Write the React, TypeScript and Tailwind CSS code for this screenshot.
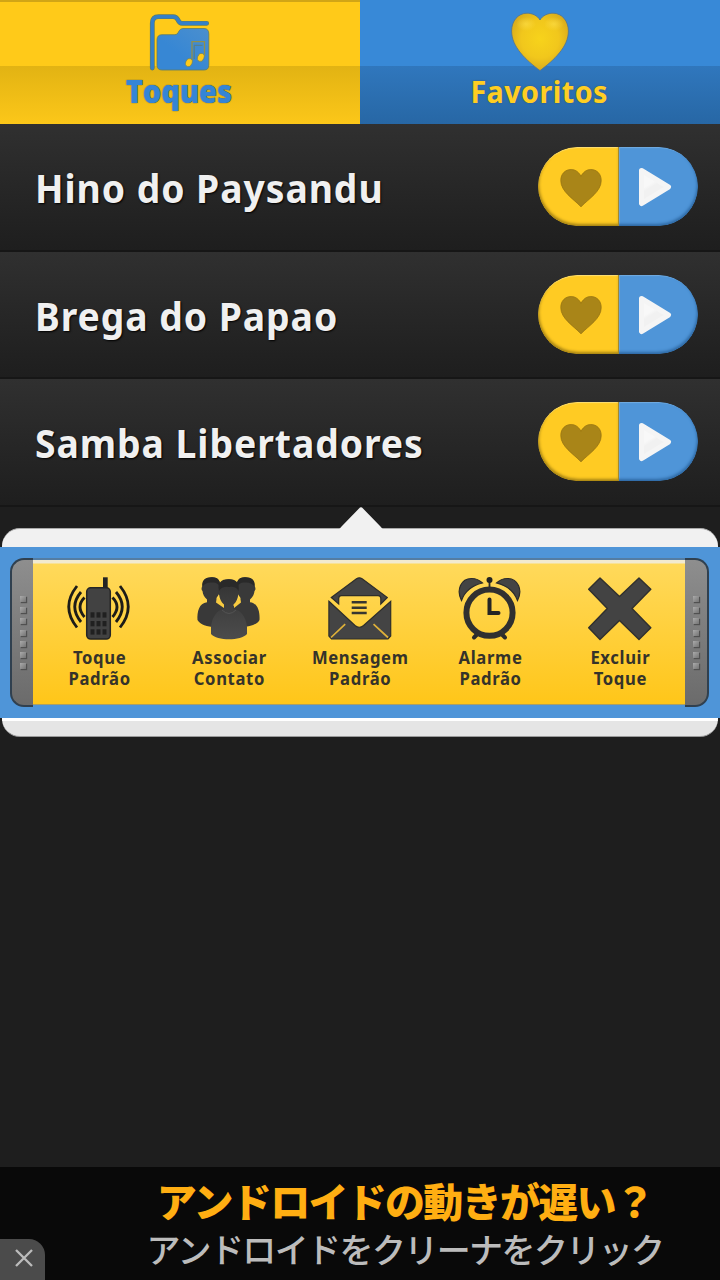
import React from "react";

const songs = ["Hino do Paysandu", "Brega do Papao", "Samba Libertadores"];

const FolderIcon: React.FC = () => (
  <svg width="64" height="60" viewBox="0 0 64 60" fill="none">
    <defs>
      <linearGradient id="folder" x1="1" y1="0" x2="0.4" y2="0.6">
        <stop offset="0" stopColor="#4b8fce" />
        <stop offset="1" stopColor="#3787d4" />
      </linearGradient>
    </defs>
    <path
      d="M4.3 56V11Q4.3 4.7 10.5 4.7H25Q28.5 4.7 30 8Q31.5 11.3 34 11.3H58.7"
      stroke="#5d7c68"
      strokeWidth="4.8"
      strokeLinecap="round"
    />
    <path
      d="M4.3 56V11Q4.3 4.7 10.5 4.7H25Q28.5 4.7 30 8Q31.5 11.3 34 11.3H58.7"
      stroke="#3480c8"
      strokeWidth="3.4"
      strokeLinecap="round"
    />
    <path
      d="M14 22.7H27Q29.5 22.7 30.5 20L31 19Q32.3 16.5 35 16.5H56Q60.8 16.5 60.8 22V53Q60.8 58 56 58H14Q9 58 9 53V28Q9 22.7 14 22.7Z"
      fill="url(#folder)"
      stroke="#5d7c68"
      strokeWidth="0.8"
    />
    <path d="M44 49V29.7H56.5V44" stroke="#90904c" strokeWidth="1.3" />
    <path d="M46.2 47V33.3H54.5" stroke="#5b7d7c" strokeWidth="1" />
    <ellipse cx="40.9" cy="50.6" rx="3.2" ry="4.2" transform="rotate(22 40.9 50.6)" fill="#ffca19" stroke="#6c8264" strokeWidth="0.7" />
    <ellipse cx="52.8" cy="45.4" rx="3.2" ry="4.2" transform="rotate(22 52.8 45.4)" fill="#ffca19" stroke="#6c8264" strokeWidth="0.7" />
  </svg>
);

const BigHeart: React.FC = () => (
  <svg width="58" height="60" viewBox="0 0 58 60">
    <defs>
      <radialGradient id="heart" cx="0.5" cy="0.45" r="0.6">
        <stop offset="0" stopColor="#f7d31b" />
        <stop offset="0.55" stopColor="#f1c71c" />
        <stop offset="1" stopColor="#d3a51d" />
      </radialGradient>
      <radialGradient id="shine">
        <stop offset="0" stopColor="#fcdc45" stopOpacity="0.7" />
        <stop offset="1" stopColor="#fcdc45" stopOpacity="0" />
      </radialGradient>
    </defs>
    <path
      d="M29 8C26.5 3.500 21 1.2 16 1.2C7 1.2 0.6 9 0.6 19C0.6 35 15 48 29 58.6C43 48 57.4 35 57.4 19C57.4 9 51 1.2 42 1.2C37 1.2 31.5 3.500 29 8Z"
      fill="url(#heart)"
      stroke="#56748a"
      strokeWidth="0.8"
    />
    <ellipse cx="15" cy="12" rx="10" ry="7" fill="url(#shine)" />
    <ellipse cx="43" cy="12" rx="10" ry="7" fill="url(#shine)" />
  </svg>
);

const SmallHeart: React.FC = () => (
  <svg width="42" height="40" viewBox="0 0 42 40">
    <path
      d="M21 8.3C19 4.3 15.5 1.5 11.3 1.5C5 1.5 0.8 6 0.8 12.5C0.8 23.5 13 30.5 21 38.8C29 30.5 41.2 23.5 41.2 12.5C41.2 6 37 1.5 30.7 1.5C26.5 1.5 23 4.3 21 8.3Z"
      fill="#a98518"
      stroke="#987512"
      strokeWidth="0.8"
    />
  </svg>
);

const PlayIcon: React.FC = () => (
  <svg width="34" height="40" viewBox="0 0 34 40">
    <defs>
      <linearGradient id="play" x1="0" y1="0" x2="0.5" y2="1">
        <stop offset="0.45" stopColor="#f8f8f8" />
        <stop offset="0.55" stopColor="#f1f1f1" />
      </linearGradient>
    </defs>
    <path
      d="M3.5 3.5L30.5 20L3.5 36.5Z"
      fill="url(#play)"
      stroke="#f5f5f5"
      strokeWidth="5"
      strokeLinejoin="round"
    />
  </svg>
);

const PhoneIcon: React.FC = () => (
  <svg width="64" height="64" viewBox="0 0 64 64" fill="none">
    <g stroke="#1d1c18" strokeWidth="2.8">
      <path d="M10 9Q-6.500 29.7 10 50.5M14 15Q1.5 29.7 14 45M17.5 20.5Q8.5 29.7 17.5 40" />
      <path d="M53 9Q69.500 29.7 53 50.5M49 15Q61.5 29.7 49 45M45.5 20.5Q54.5 29.7 45.5 40" />
    </g>
    <rect x="36" y="0.3" width="4.7" height="13" fill="#242424" />
    <rect x="19.7" y="10.8" width="23.6" height="51.3" rx="4" fill="#424242" stroke="#252525" strokeWidth="1.5" />
    {[35.3, 44, 52.3].map((y) => (
      <g key={y} fill="#202020">
        <rect x="23.5" y={y} width="4" height="5.3" />
        <rect x="29.5" y={y} width="4" height="5.3" />
        <rect x="35.5" y={y} width="4" height="5.3" />
      </g>
    ))}
  </svg>
);

const PeopleIcon: React.FC = () => (
  <svg width="64" height="64" viewBox="0 0 64 64">
    <defs>
      <linearGradient id="person" x1="0" y1="0" x2="0" y2="1">
        <stop offset="0" stopColor="#333" />
        <stop offset="1" stopColor="#4c4c4c" />
      </linearGradient>
    </defs>
    <g fill="#393939">
      <path d="M10 22.5C7 20 5.8 17 5.5 14C4 13 4.5 10 5.5 9C5.5 3 10 0.3 15 0.3C20 0.3 23 3 23.3 8C23.3 14 22 18 19.5 21V25L30 31L20 50C12 50.5 3 48 0.5 43C0 35 2 26 10 25.2Z" />
      <path d="M53 22.5C56 20 57.2 17 57.5 14C59 13 58.5 10 57.5 9C57.5 3 53 0.3 48 0.3C43 0.3 40 3 39.7 8C39.7 14 41 18 43.5 21V25L33 31L43 50C51 50.5 60 48 62.5 43C63 35 61 26 53 25.2Z" />
    </g>
    <path d="M5.5 10C4 3 9 0 15 0.3C21 0 24 4 22.8 10Q21 5 15 5.5Q8 5 5.5 10ZM57.5 10C59 3 54 0 48 0.3C42 0 39 4 40.2 10Q42 5 48 5.5Q55 5 57.5 10Z" fill="#292929" />
    <path d="M20.5 20.5L27 26V31L19 25.5ZM42.5 20.5L37 26V31L44 25.5Z" fill="#f8cb40" />
    <path
      d="M27 27.5C24 25 22.5 21 22.2 18C20 17 20.8 13.5 22 12.5C22 5 27 2.3 31.7 2.3C37 2.3 41 5 41.5 12.5C42.7 13.5 43 17 41.2 18C40.8 21 39.5 25 36.5 27.5V32C44 33 49 40 50 50V57C44 64 20 64 14 57V50C15 40 20 33 27 32Z"
      fill="url(#person)"
    />
    <path d="M22 14C20 5 25 2 32 2.3C39 2 43 6 41.5 14Q39 9 32 10Q25 9 22 14Z" fill="#292929" />
    <path d="M25 33Q32 40 39 33" fill="none" stroke="#555" strokeWidth="0.9" />
  </svg>
);

const MailIcon: React.FC = () => (
  <svg width="64" height="64" viewBox="0 0 64 64" fill="#444">
    <path
      d="M3.3 20.5L28.5 1.8Q31.3 -0.2 34.1 1.8L59.3 20.5L52.8 27V21.5Q52.8 18.7 50 18.7H13.5Q10.7 18.7 10.7 21.5V27Z"
      stroke="#2e2e2b"
      strokeWidth="1.2"
    />
    <path
      d="M0.9 24.3L27 48.5Q31.3 52 35.6 48.5L62.7 24.3V59L60 62H3.5L0.9 59Z"
      stroke="#2e2e2b"
      strokeWidth="1.2"
    />
    <path d="M3 60.5L17.2 47.2M60 60.5L45.5 47.2" stroke="#dfb139" strokeWidth="1.7" />
    <path d="M23.7 25.3H38.7M23.7 30.7H38.7M23.7 36H38.7" stroke="#373630" strokeWidth="2.5" />
  </svg>
);

const AlarmIcon: React.FC = () => (
  <svg width="64" height="64" viewBox="0 0 64 64" fill="none" strokeLinecap="round">
    <path d="M3.5 23.5C-2 13 3 1.5 13.5 1.5C18 1.5 22 3.5 24.5 6C14 8.5 6.5 15 3.5 23.5Z" fill="#444" stroke="#2b2b2b" strokeWidth="1.2" />
    <path d="M59.5 23.5C65 13 60 1.5 49.5 1.5C45 1.5 41 3.5 38.5 6C49 8.5 56.5 15 59.5 23.5Z" fill="#444" stroke="#2b2b2b" strokeWidth="1.2" />
    <path d="M31.5 3V10" stroke="#2b2b2b" strokeWidth="1.8" />
    <circle cx="31.5" cy="3.1" r="3" fill="#222" />
    <path d="M19.5 57L16 60.5M43.5 57L47 60.5" stroke="#2b2b2b" strokeWidth="4" />
    <circle cx="31.5" cy="35.7" r="23.1" stroke="#303030" strokeWidth="6" />
    <path d="M31.5 22.5V36H40.5" stroke="#252525" strokeWidth="4" />
  </svg>
);

const DeleteIcon: React.FC = () => (
  <svg width="64" height="64" viewBox="0 0 64 64">
    <path
      d="M12 1L31.5 19.6L51 1L62.8 12.3L44 31.5L62.8 50.7L51 62.5L31.5 43.5L12 62.5L0.7 50.7L19.3 31.5L0.7 12.3Z"
      fill="#434343"
      stroke="#30302e"
      strokeWidth="1.4"
      strokeLinejoin="round"
    />
  </svg>
);

const actions = [
  { icon: <PhoneIcon />, label: "Toque Padrão" },
  { icon: <PeopleIcon />, label: "Associar Contato" },
  { icon: <MailIcon />, label: "Mensagem Padrão" },
  { icon: <AlarmIcon />, label: "Alarme Padrão" },
  { icon: <DeleteIcon />, label: "Excluir Toque" },
];

const GripDots: React.FC = () => (
  <div className="flex flex-col gap-[5.2px]">
    {[0, 1, 2, 3, 4, 5, 6].map((i) => (
      <span
        key={i}
        className="size-[6px] bg-linear-to-br from-[#ababab] to-[#747474] shadow-[1px_1px_1px_#505050]"
      />
    ))}
  </div>
);

const SongRow: React.FC<{ title: string }> = ({ title }) => (
  <li className="flex h-[127.5px] items-center justify-between border-b-2 border-[#161616] bg-linear-to-b from-[#303030] to-[#1e1e1e] pr-[22px] pl-[35px]">
    <span className="origin-left scale-x-[0.933] pt-[3px] text-[40px] font-bold tracking-[1px] whitespace-nowrap text-[#f0f0f0] [text-shadow:1px_1px_2px_#000]">
      {title}
    </span>
    <div className="flex h-[79px] w-[160px] overflow-hidden rounded-full">
      <button
        type="button"
        className="flex flex-1 items-center justify-center rounded-l-full border-r border-[#a58a2c] bg-[#ffcb23] pt-[2px] pl-[6px] shadow-[inset_1px_-2px_3px_#a58213,inset_0_1px_1px_#ffe27a]"
      >
        <SmallHeart />
      </button>
      <button
        type="button"
        className="flex flex-1 items-center justify-center rounded-r-full bg-[#4f95d8] pt-[1px] pr-[6px] shadow-[inset_-1px_-2px_3px_#2e69a4,inset_1px_1px_1px_#76afe3]"
      >
        <PlayIcon />
      </button>
    </div>
  </li>
);

const App: React.FC = () => {
  return (
    <div className="flex h-[1280px] w-[720px] flex-col overflow-hidden bg-[#1e1e1e] font-['Noto_Sans','Open_Sans',sans-serif]">
      <nav className="flex h-[124px] shrink-0">
        <button
          type="button"
          className="flex w-[360px] flex-col items-center border-t-2 border-[#d1a516] bg-[linear-gradient(#ffca19_64px,#e2b313_64px,#fcc719_122px)] pt-[10px]"
        >
          <FolderIcon />
          <span className="scale-x-[0.93] pr-[2px] font-['Open_Sans',sans-serif] text-[31px] leading-[38px] font-extrabold text-[#3585d6] [text-shadow:0_0_1px_#5a6448,0_0_1px_#5a6448]">
            Toques
          </span>
        </button>
        <button
          type="button"
          className="flex flex-1 flex-col items-center bg-[linear-gradient(#3889d7_66px,#3077bd_66px,#2767a5_124px)] pt-[12px] pr-[1px]"
        >
          <BigHeart />
          <span className="scale-x-[0.94] text-[30.5px] leading-[38px] font-bold tracking-[0.5px] text-[#ffce22] [text-shadow:0_0_2px_#35576f]">
            Favoritos
          </span>
        </button>
      </nav>

      <ul className="shrink-0">
        {songs.map((title) => (
          <SongRow key={title} title={title} />
        ))}
      </ul>

      <section className="flex shrink-0 flex-col">
        <div className="flex h-[21.5px] justify-center">
          <svg width="48" height="23" viewBox="0 0 48 23" className="relative ml-[2px] shrink-0">
            <path d="M0 23Q3 22 5 19L22 1.5Q24 -1 26 1.5L43 19Q45 22 48 23Z" fill="#f1f1f1" />
          </svg>
        </div>
        <div className="mx-[2px] h-[19px] rounded-t-[18px] border-t border-[#aaa] bg-[#f1f1f1]" />
        <div className="flex h-[171px] bg-[#4f95d8] px-[10px] pt-[11px] pb-[11px]">
          <div className="flex w-[23px] items-center justify-center rounded-l-[14px] border-2 border-r-0 border-[#30404f] bg-linear-to-b from-[#8e8e8e] to-[#6b6b6b]">
            <GripDots />
          </div>
          <div className="mb-[2px] flex w-[652px] border-t-2 border-b border-t-[#547da3] border-b-[#aa9f65] bg-[linear-gradient(#f2ead0_3px,#ffd95b_4px,#ffc619)]">
            {actions.map(({ icon, label }) => (
              <button
                type="button"
                key={label}
                className="flex flex-1 flex-col items-center pt-[17px] pl-[1px] text-[#35332a]"
              >
                {icon}
                <span className="mt-[6px] w-min scale-x-[0.925] pl-[1px] text-[18px] leading-[21px] font-bold tracking-[0.7px]">
                  {label}
                </span>
              </button>
            ))}
          </div>
          <div className="flex w-[24px] items-center justify-center rounded-r-[14px] border-2 border-l-0 border-[#30404f] bg-linear-to-b from-[#8e8e8e] to-[#6b6b6b]">
            <GripDots />
          </div>
        </div>
        <div className="mx-[2px] h-[19px] rounded-b-[18px] border-t-3 border-b border-t-white border-b-[#999] bg-[#e5e5e5]" />
      </section>

      <footer className="mt-auto flex h-[113px] shrink-0 items-end bg-[#090909] font-['Noto_Sans_CJK_JP',sans-serif]">
        <button
          type="button"
          className="flex h-[41px] w-[45px] items-center justify-center rounded-tr-[16px] bg-[#4b4b4b]"
        >
          <svg width="20" height="20" viewBox="0 0 20 20" className="mt-[-4px] mr-[-2px]">
            <path d="M2 2L18 18M18 2L2 18" stroke="#bcbcbc" strokeWidth="2.3" />
          </svg>
        </button>
        <div className="flex h-full flex-1 flex-col items-center pt-[7px] pl-[45px] whitespace-nowrap">
          <p className="text-[40px] leading-[52px] font-black tracking-[-1.7px] text-[#ffae12]">
            アンドロイドの動きが遅い？
          </p>
          <p className="text-[34px] leading-[46px] font-medium tracking-[-1.6px] text-[#bcbcbc]">
            アンドロイドをクリーナをクリック
          </p>
        </div>
      </footer>
    </div>
  );
};

export default App;
